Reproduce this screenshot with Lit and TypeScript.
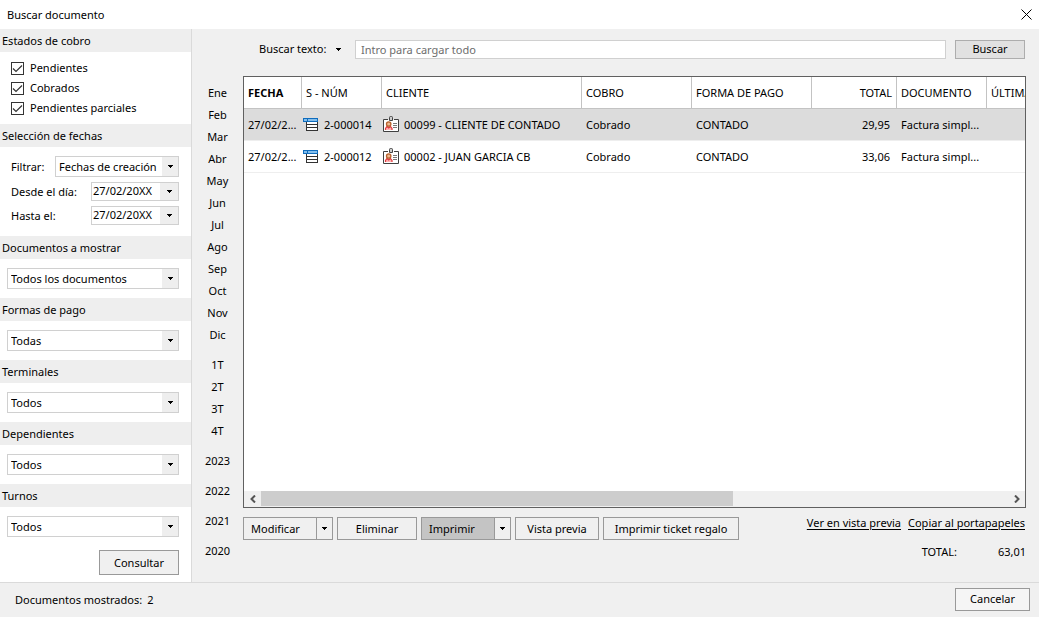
import { LitElement, html, css, svg } from "lit";
import { customElement, property, state } from "lit/decorators.js";
import { classMap } from "lit/directives/class-map.js";

const caret = html`<svg class="caret" width="5" height="3" viewBox="0 0 5 3" aria-hidden="true">
  <path d="M0 0h5v1h-1v1h-1v1h-1v-1h-1v-1h-1z" fill="#000" shape-rendering="crispEdges" />
</svg>`;

const listIcon = html`<svg class="icon" width="16" height="16" viewBox="0 0 16 16" aria-hidden="true">
  <g shape-rendering="crispEdges">
    <path d="M3 5h12v9H3z" fill="#fff" />
    <path d="M3 5h1v9H3zM14 5h1v9h-1zM3 7h12v1H3zM3 10h12v1H3zM3 13h12v1H3z" fill="#333" />
    <path d="M0 1h15v4H0z" fill="#0f6cbd" />
    <path d="M1 2h3v2H1zM5 2h9v2H5z" fill="#83beec" />
  </g>
</svg>`;

const cardIcon = html`<svg class="icon" width="16" height="17" viewBox="0 0 16 17" aria-hidden="true">
  <path d="M.5 3.500h15v12H.5z" fill="#fff" />
  <path d="M5 3.500H.5v12h15v-12H11" fill="none" stroke="#404040" />
  <path d="M6.500 4.500V1.500Q6.500 .5 7.500 .5h1Q9.500 .5 9.500 1.500v3z" fill="#ccc" stroke="#444" />
  <path d="M2.500 14c0-2.600 1-4 3.200-4s3.300 1.400 3.300 4z" fill="#ffb3b3" />
  <path d="M2.500 14v-1.500l1.500-2 1.700 1.500 1.800-1.500 1.500 2V14" fill="none" stroke="#e0393e" stroke-width="1.200" />
  <circle cx="5.700" cy="8" r="2.200" fill="#f0b890" stroke="#b5622c" stroke-width="1.300" />
  <path d="M10 7.500h4M10 9.500h4M10 11.500h4" stroke="#777" />
</svg>`;

interface Row {
  date: string;
  num: string;
  client: string;
  status: string;
  payment: string;
  total: string;
  doc: string;
}

const ROWS: Row[] = [
  { date: "27/02/2...", num: "2-000014", client: "00099 - CLIENTE DE CONTADO", status: "Cobrado", payment: "CONTADO", total: "29,95", doc: "Factura simpl..." },
  { date: "27/02/2...", num: "2-000012", client: "00002 - JUAN GARCIA CB", status: "Cobrado", payment: "CONTADO", total: "33,06", doc: "Factura simpl..." },
];

const PERIODS = [
  ["Ene", "Feb", "Mar", "Abr", "May", "Jun", "Jul", "Ago", "Sep", "Oct", "Nov", "Dic"],
  ["1T", "2T", "3T", "4T"],
  ["2023"],
  ["2022"],
  ["2021"],
  ["2020"],
];

const base = css`
  * {
    box-sizing: border-box;
  }
  button,
  input,
  select {
    font: inherit;
    color: inherit;
    margin: 0;
    padding: 0;
    border-radius: 0;
  }
  .caret {
    display: block;
    flex: none;
  }
`;

@customElement("filter-panel")
export class FilterPanel extends LitElement {
  static styles = [
    base,
    css`
      :host {
        display: block;
        background: #fff;
        border-right: 1px solid #dadada;
      }
      .title {
        margin: 0;
        padding-left: 2px;
        height: 23px;
        line-height: 24px;
        font-size: 11px;
        font-weight: 400;
        background: #eee;
      }
      .checks {
        padding: 6px 11px;
      }
      .check {
        display: flex;
        align-items: center;
        gap: 6px;
        height: 20px;
      }
      .box {
        appearance: none;
        display: block;
        width: 13px;
        height: 13px;
        border: 1px solid #333;
        background: #fff;
      }
      .tick {
        display: grid;
      }
      .tick > * {
        grid-area: 1 / 1;
      }
      .tick svg {
        pointer-events: none;
      }
      .box:not(:checked) + svg {
        visibility: hidden;
      }
      .fields {
        padding: 9px 12px 11px 11px;
        display: grid;
        gap: 5px;
      }
      .field {
        display: flex;
        justify-content: space-between;
        align-items: center;
      }
      .single {
        padding: 9px 12px 9px 7px;
      }
      .combo {
        display: grid;
        grid-template-columns: 1fr 16px;
        height: 21px;
        border: 1px solid #d0d0d0;
        background: linear-gradient(#eee, #eee) right / 16px 100% no-repeat #fff;
      }
      .combo.filter {
        width: 124px;
      }
      .combo select {
        appearance: none;
        grid-area: 1 / 1 / 2 / 3;
        border: 0;
        background: none;
        padding-left: 3px;
        outline-offset: 1px;
        min-width: 0;
      }
      .combo .caret {
        grid-area: 1 / 2;
        place-self: center;
        pointer-events: none;
      }
      .date {
        display: flex;
        width: 88px;
        height: 19px;
        border: 1px solid #d0d0d0;
      }
      .date input {
        flex: 1;
        min-width: 0;
        border: 0;
        padding: 0 0 1px 1px;
        background: #fff;
      }
      .date button {
        display: grid;
        place-items: center;
        width: 18px;
        border: 0;
        background: #eee;
      }
      .actions {
        display: flex;
        justify-content: flex-end;
        padding: 4px 12px 7px;
      }
      .consult {
        width: 80px;
        height: 25px;
        border: 1px solid #999;
        background: #f0f0f0;
      }
    `,
  ];

  private check(label: string) {
    return html`<label class="check">
      <span class="tick">
        <input class="box" type="checkbox" checked />
        <svg width="13" height="13" viewBox="0 0 13 13" aria-hidden="true">
          <path d="M2 6.500l3 3 6-6" fill="none" stroke="#333" stroke-width="1.200" />
        </svg>
      </span>
      ${label}
    </label>`;
  }

  private combo(id: string, value: string, extra = "") {
    return html`<span class="combo ${extra}">
      <select id=${id} aria-labelledby=${id + "-label"}><option>${value}</option></select>
      ${caret}
    </span>`;
  }

  private date(id: string, label: string) {
    return html`<div class="field">
      <label for=${id}>${label}</label>
      <span class="date">
        <input id=${id} type="text" value="27/02/20XX" />
        <button type="button" aria-label="Calendario">${caret}</button>
      </span>
    </div>`;
  }

  private section(id: string, title: string, value: string) {
    return html`<section>
      <h2 class="title" id=${id + "-label"}>${title}</h2>
      <div class="single">${this.combo(id, value)}</div>
    </section>`;
  }

  render() {
    return html`
      <section>
        <h2 class="title">Estados de cobro</h2>
        <div class="checks">${["Pendientes", "Cobrados", "Pendientes parciales"].map((t) => this.check(t))}</div>
      </section>
      <section>
        <h2 class="title">Selección de fechas</h2>
        <div class="fields">
          <div class="field">
            <label for="filter" id="filter-label">Filtrar:</label>
            ${this.combo("filter", "Fechas de creación", "filter")}
          </div>
          ${this.date("from", "Desde el día:")} ${this.date("to", "Hasta el:")}
        </div>
      </section>
      ${this.section("docs", "Documentos a mostrar", "Todos los documentos")}
      ${this.section("payment", "Formas de pago", "Todas")}
      ${this.section("terminals", "Terminales", "Todos")}
      ${this.section("staff", "Dependientes", "Todos")}
      ${this.section("shifts", "Turnos", "Todos")}
      <div class="actions"><button class="consult" type="button">Consultar</button></div>
    `;
  }
}

@customElement("document-grid")
export class DocumentGrid extends LitElement {
  @property({ attribute: false }) rows: Row[] = [];
  @state() private selected = 0;

  static styles = [
    base,
    css`
      :host {
        display: flex;
        flex-direction: column;
        border: 1px solid #606060;
        background: #fff;
        min-width: 0;
      }
      .view {
        flex: 1;
        overflow: hidden;
      }
      table {
        width: 100%;
        min-width: 872px;
        table-layout: fixed;
        border-collapse: separate;
        border-spacing: 0;
      }
      th,
      td {
        height: 32px;
        padding: 0 0 0 4px;
        text-align: left;
        font-weight: 400;
        white-space: nowrap;
        overflow: hidden;
      }
      th {
        border-right: 1px solid #c3c3c3;
        border-bottom: 1px solid #c3c3c3;
      }
      td {
        border-bottom: 1px solid #eee;
      }
      th.sorted {
        font-weight: 700;
      }
      th.amount {
        text-align: right;
        padding-right: 4px;
      }
      td.amount {
        text-align: right;
        padding-right: 7px;
      }
      .selected td {
        background: #dcdcdc;
      }
      .c58 {
        width: 58px;
      }
      .c80 {
        width: 80px;
      }
      .c200 {
        width: 200px;
      }
      .c110 {
        width: 110px;
      }
      .c120 {
        width: 120px;
      }
      .c85 {
        width: 85px;
      }
      .c90 {
        width: 90px;
      }
      td.with-icon {
        padding-left: 1px;
      }
      .cell {
        display: flex;
        align-items: center;
        gap: 5px;
      }
      .icon {
        flex: none;
      }
      .scroll {
        display: flex;
        height: 16px;
        padding-bottom: 1px;
        background: #f0f0f0;
      }
      .scroll button {
        width: 17px;
        border: 0;
        background: none;
        display: grid;
        place-items: center;
      }
      .track {
        flex: 1;
      }
      .thumb {
        width: 63.2%;
        height: 100%;
        background: #cdcdcd;
      }
    `,
  ];

  private arrow(d: string) {
    return html`<svg width="6" height="8" viewBox="0 0 6 8" aria-hidden="true">
      ${svg`<path d=${d} fill="none" stroke="#555" stroke-width="2" />`}
    </svg>`;
  }

  render() {
    return html`
      <div class="view">
        <table>
          <thead>
            <tr>
              <th class="c58 sorted">FECHA</th>
              <th class="c80">S - NÚM</th>
              <th class="c200">CLIENTE</th>
              <th class="c110">COBRO</th>
              <th class="c120">FORMA DE PAGO</th>
              <th class="c85 amount">TOTAL</th>
              <th class="c90">DOCUMENTO</th>
              <th>ÚLTIMA</th>
            </tr>
          </thead>
          <tbody>
            ${this.rows.map(
              (r, i) => html`<tr class=${classMap({ selected: i === this.selected })} @click=${() => (this.selected = i)}>
                <td>${r.date}</td>
                <td class="with-icon"><div class="cell">${listIcon}${r.num}</div></td>
                <td class="with-icon"><div class="cell">${cardIcon}${r.client}</div></td>
                <td>${r.status}</td>
                <td>${r.payment}</td>
                <td class="amount">${r.total}</td>
                <td>${r.doc}</td>
                <td></td>
              </tr>`
            )}
          </tbody>
        </table>
      </div>
      <div class="scroll">
        <button type="button" aria-label="Izquierda">${this.arrow("M5 0.500L1.500 4L5 7.500")}</button>
        <div class="track"><div class="thumb"></div></div>
        <button type="button" aria-label="Derecha">${this.arrow("M1 0.500L4.500 4L1 7.500")}</button>
      </div>
    `;
  }
}

@customElement("app-root")
export class AppRoot extends LitElement {
  static styles = [
    base,
    css`
      :host {
        display: flex;
        flex-direction: column;
        min-height: 100vh;
        background: #f0f0f0;
        color: #000;
        font-family: "Noto Sans", "Open Sans", sans-serif;
        font-size: 11px;
        line-height: 16px;
      }
      .titlebar {
        display: flex;
        align-items: center;
        justify-content: space-between;
        height: 29px;
        padding: 0 7px;
        background: #fff;
      }
      .titlebar h1 {
        margin: 0;
        font-size: 11px;
        font-weight: 400;
      }
      .close {
        width: 11px;
        height: 11px;
        border: 0;
        background: none;
      }
      .close svg {
        display: block;
      }
      .body {
        flex: 1;
        display: grid;
        grid-template-columns: 192px 51px 1fr;
      }
      .periods {
        display: flex;
        flex-direction: column;
        gap: 8px;
        padding-top: 53px;
      }
      .group {
        display: flex;
        flex-direction: column;
      }
      .group button {
        height: 22px;
        border: 0;
        background: none;
      }
      .main {
        display: flex;
        flex-direction: column;
        min-width: 0;
        padding: 10px 13px 22px 0;
      }
      .search {
        display: flex;
        align-items: center;
        height: 20px;
        padding: 0 1px 0 16px;
        margin-bottom: 17px;
      }
      .mode {
        display: flex;
        align-items: center;
        justify-content: space-between;
        width: 82px;
        margin-right: 14px;
      }
      .mode button {
        border: 0;
        background: none;
        height: 16px;
      }
      .search input {
        flex: 1;
        min-width: 0;
        height: 19px;
        padding: 0 5px;
        border: 1px solid #d0d0d0;
        background: #fff;
      }
      .search input::placeholder {
        color: #6d6d6d;
        opacity: 1;
      }
      .go {
        width: 70px;
        height: 19px;
        margin-left: 9px;
        border: 1px solid #adadad;
        background: #e1e1e1;
      }
      document-grid {
        flex: 1;
      }
      .below {
        display: flex;
        justify-content: space-between;
        padding-top: 9px;
      }
      .buttons {
        display: flex;
        gap: 4px;
      }
      .btn,
      .split {
        height: 23px;
        border: 1px solid #999;
        background: #f0f0f0;
      }
      .w80 {
        width: 80px;
      }
      .w84 {
        width: 84px;
      }
      .w136 {
        width: 136px;
      }
      .split {
        display: flex;
        width: 90px;
      }
      .split button {
        border: 0;
        background: none;
      }
      .split .act {
        flex: 1;
        text-align: left;
        padding-left: 7px;
      }
      .split .more {
        display: grid;
        place-items: center;
        width: 16px;
        border-left: 1px solid #999;
      }
      .split .hot {
        background: #c4c4c4;
      }
      .links {
        display: flex;
        gap: 7px;
        padding-right: 1px;
        height: 12px;
        line-height: 12px;
      }
      .links a {
        color: inherit;
        text-underline-offset: 2px;
      }
      .sum {
        display: flex;
        justify-content: flex-end;
        gap: 41px;
        margin-top: 4px;
      }
      .footer {
        display: flex;
        align-items: center;
        justify-content: space-between;
        height: 35px;
        padding: 0 9px 2px 15px;
        border-top: 1px solid #dadada;
      }
      .count {
        display: flex;
        gap: 5px;
        padding-top: 2px;
      }
      .cancel {
        width: 75px;
        height: 23px;
        border: 1px solid #999;
        background: #f5f5f5;
      }
    `,
  ];

  render() {
    return html`
      <header class="titlebar">
        <h1>Buscar documento</h1>
        <button class="close" type="button" aria-label="Cerrar">
          <svg width="11" height="11" viewBox="0 0 11 11"><path d="M.5 .5l10 10M10.500 .5l-10 10" stroke="#000" /></svg>
        </button>
      </header>
      <div class="body">
        <filter-panel></filter-panel>
        <nav class="periods">
          ${PERIODS.map((g) => html`<div class="group">${g.map((p) => html`<button type="button">${p}</button>`)}</div>`)}
        </nav>
        <main class="main">
          <div class="search">
            <span class="mode">
              <label for="query">Buscar texto:</label>
              <button type="button" aria-label="Modo">${caret}</button>
            </span>
            <input id="query" type="text" placeholder="Intro para cargar todo" />
            <button class="go" type="button">Buscar</button>
          </div>
          <document-grid .rows=${ROWS}></document-grid>
          <div class="below">
            <div class="buttons">
              <span class="split">
                <button class="act" type="button">Modificar</button>
                <button class="more" type="button" aria-label="Más">${caret}</button>
              </span>
              <button class="btn w80" type="button">Eliminar</button>
              <span class="split">
                <button class="act hot" type="button">Imprimir</button>
                <button class="more" type="button" aria-label="Más">${caret}</button>
              </span>
              <button class="btn w84" type="button">Vista previa</button>
              <button class="btn w136" type="button">Imprimir ticket regalo</button>
            </div>
            <div class="links"><a href="#">Ver en vista previa</a><a href="#">Copiar al portapapeles</a></div>
          </div>
          <div class="sum"><span>TOTAL:</span><span>63,01</span></div>
        </main>
      </div>
      <footer class="footer">
        <div class="count"><span>Documentos mostrados:</span><span>2</span></div>
        <button class="cancel" type="button">Cancelar</button>
      </footer>
    `;
  }
}
